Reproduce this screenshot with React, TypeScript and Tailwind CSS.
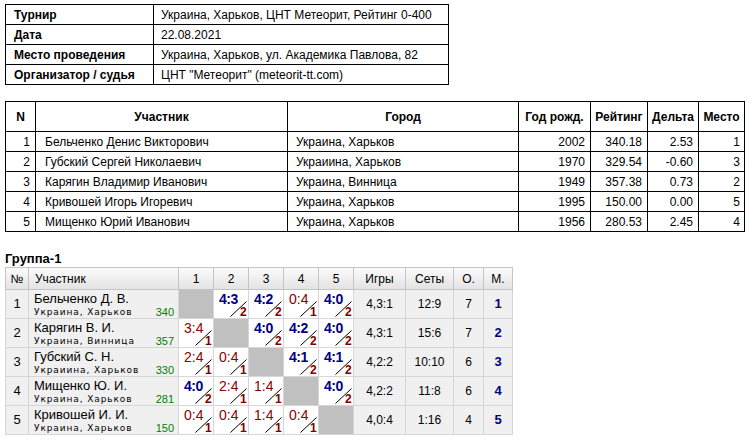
const info = [
  ['Турнир', 'Украина, Харьков, ЦНТ Метеорит, Рейтинг 0-400'],
  ['Дата', '22.08.2021'],
  ['Место проведения', 'Украина, Харьков, ул. Академика Павлова, 82'],
  ['Организатор / судья', 'ЦНТ "Метеорит" (meteorit-tt.com)'],
];

const players = [
  ['1', 'Бельченко Денис Викторович', 'Украина, Харьков', '2002', '340.18', '2.53', '1'],
  ['2', 'Губский Сергей Николаевич', 'Украиина, Харьков', '1970', '329.54', '-0.60', '3'],
  ['3', 'Карягин Владимир Иванович', 'Украина, Винница', '1949', '357.38', '0.73', '2'],
  ['4', 'Кривошей Игорь Игоревич', 'Украина, Харьков', '1995', '150.00', '0.00', '5'],
  ['5', 'Мищенко Юрий Иванович', 'Украина, Харьков', '1956', '280.53', '2.45', '4'],
];

const group = [
  { n: 1, name: 'Бельченко Д. В.', city: 'Украина, Харьков', r: '340', s: ['', '4:3', '4:2', '0:4', '4:0'], g: '4,3:1', sets: '12:9', o: '7', m: '1' },
  { n: 2, name: 'Карягин В. И.', city: 'Украина, Винница', r: '357', s: ['3:4', '', '4:0', '4:2', '4:0'], g: '4,3:1', sets: '15:6', o: '7', m: '2' },
  { n: 3, name: 'Губский С. Н.', city: 'Украиина, Харьков', r: '330', s: ['2:4', '0:4', '', '4:1', '4:1'], g: '4,2:2', sets: '10:10', o: '6', m: '3' },
  { n: 4, name: 'Мищенко Ю. И.', city: 'Украина, Харьков', r: '281', s: ['4:0', '2:4', '1:4', '', '4:0'], g: '4,2:2', sets: '11:8', o: '6', m: '4' },
  { n: 5, name: 'Кривошей И. И.', city: 'Украина, Харьков', r: '150', s: ['0:4', '0:4', '1:4', '0:4', ''], g: '4,0:4', sets: '1:16', o: '4', m: '5' },
];

const arial = "font-['Liberation_Sans',Arial,sans-serif]";

function Score({ s }: { s: string }) {
  if (!s) {
    return <td className="border border-[#d6d6d6] bg-[#c0c0c0] p-0" />;
  }
  const [a, b] = s.split(':').map(Number);
  const win = a > b;
  return (
    <td className="border border-[#d6d6d6] bg-white p-0">
      <div className="relative h-[28px] w-[34px]">
        <span
          className={
            'absolute left-[5px] ' +
            (win
              ? 'top-[2px] text-[14px] leading-[14px] font-bold tracking-[-0.5px] text-[#000080]'
              : 'top-[2px] text-[14px] leading-[14px] text-[#8b0000]')
          }
        >
          {s}
        </span>
        <svg className="absolute left-0 top-0" width="34" height="28">
          <line x1="16.5" y1="26.5" x2="32.5" y2="11.5" stroke="#000" strokeWidth="1" />
        </svg>
        <span className="absolute left-[26px] top-[16px] text-[12px] font-bold leading-[12px] text-[#800000]">
          {win ? 2 : 1}
        </span>
      </div>
    </td>
  );
}

export default function App() {
  return (
    <div className={'bg-white px-[5px] pt-[4px] text-[12px] text-black ' + arial}>
      <table className="w-[444px] border-collapse border border-black">
        <tbody>
          {info.map(([k, v]) => (
            <tr key={k} className="h-[20px]">
              <td className="w-[148px] border border-black px-[8px] font-bold">{k}</td>
              <td className="border border-black px-[7px]">{v}</td>
            </tr>
          ))}
        </tbody>
      </table>

      <table className="mt-[16px] w-[740px] border-collapse border border-black">
        <thead>
          <tr className="h-[30px] font-bold">
            <th className="w-[30px] border border-black">N</th>
            <th className="w-[252px] border border-black">Участник</th>
            <th className="w-[231px] border border-black">Город</th>
            <th className="w-[72px] border border-black">Год рожд.</th>
            <th className="w-[57px] border border-black">Рейтинг</th>
            <th className="w-[51px] border border-black">Дельта</th>
            <th className="border border-black">Место</th>
          </tr>
        </thead>
        <tbody>
          {players.map((p) => (
            <tr key={p[0]} className="h-[20px]">
              <td className="border border-black pr-[5px] text-right">{p[0]}</td>
              <td className="border border-black pl-[9px]">{p[1]}</td>
              <td className="border border-black pl-[8px]">{p[2]}</td>
              <td className="border border-black pr-[5px] text-right">{p[3]}</td>
              <td className="border border-black pr-[5px] text-right">{p[4]}</td>
              <td className="border border-black pr-[5px] text-right">{p[5]}</td>
              <td className="border border-black pr-[4px] text-right">{p[6]}</td>
            </tr>
          ))}
        </tbody>
      </table>

      <div className="mt-[19px] h-[16px] text-[13px] font-bold leading-[16px]">Группа-1</div>

      <table className="w-[508px] table-fixed border-collapse border border-[#b0b0b0]">
        <thead>
          <tr className="h-[22px] bg-gradient-to-b from-[#fbfbfb] to-[#e2e2e2]">
            <th className="w-[23px] border border-[#c4c4c4] font-normal">№</th>
            <th className="w-[150px] border border-[#c4c4c4] pl-[6px] text-left font-normal">Участник</th>
            {[1, 2, 3, 4, 5].map((i) => (
              <th key={i} className="w-[35px] border border-[#c4c4c4] font-normal">
                {i}
              </th>
            ))}
            <th className="w-[52px] border border-[#c4c4c4] font-normal">Игры</th>
            <th className="w-[48px] border border-[#c4c4c4] font-normal">Сеты</th>
            <th className="w-[30px] border border-[#c4c4c4] font-normal">О.</th>
            <th className="border border-[#c4c4c4] font-normal">М.</th>
          </tr>
        </thead>
        <tbody className="bg-[#f0f0f0]">
          {group.map((row) => (
            <tr key={row.n} className="h-[28px]">
              <td className="border border-[#d6d6d6] text-center text-[13px]">{row.n}</td>
              <td className="border border-[#d6d6d6] p-0">
                <div className="flex h-[28px] flex-col pl-[5px] pr-[4px]">
                  <div className="pt-[2px] text-[13px] leading-[14px]">{row.name}</div>
                  <div className="flex items-end justify-between">
                    <span className="font-['DejaVu_Sans',Verdana,sans-serif] text-[9px] leading-[11px] tracking-[0.9px]">
                      {row.city}
                    </span>
                    <span className="text-[11px] leading-[12px] text-[#008000]">{row.r}</span>
                  </div>
                </div>
              </td>
              {row.s.map((s, i) => (
                <Score key={i} s={s} />
              ))}
              <td className="border border-[#d6d6d6] text-center">{row.g}</td>
              <td className="border border-[#d6d6d6] text-center">{row.sets}</td>
              <td className="border border-[#d6d6d6] text-center">{row.o}</td>
              <td className="border border-[#d6d6d6] text-center text-[13px] font-bold text-[#000080]">{row.m}</td>
            </tr>
          ))}
        </tbody>
      </table>
    </div>
  );
}
